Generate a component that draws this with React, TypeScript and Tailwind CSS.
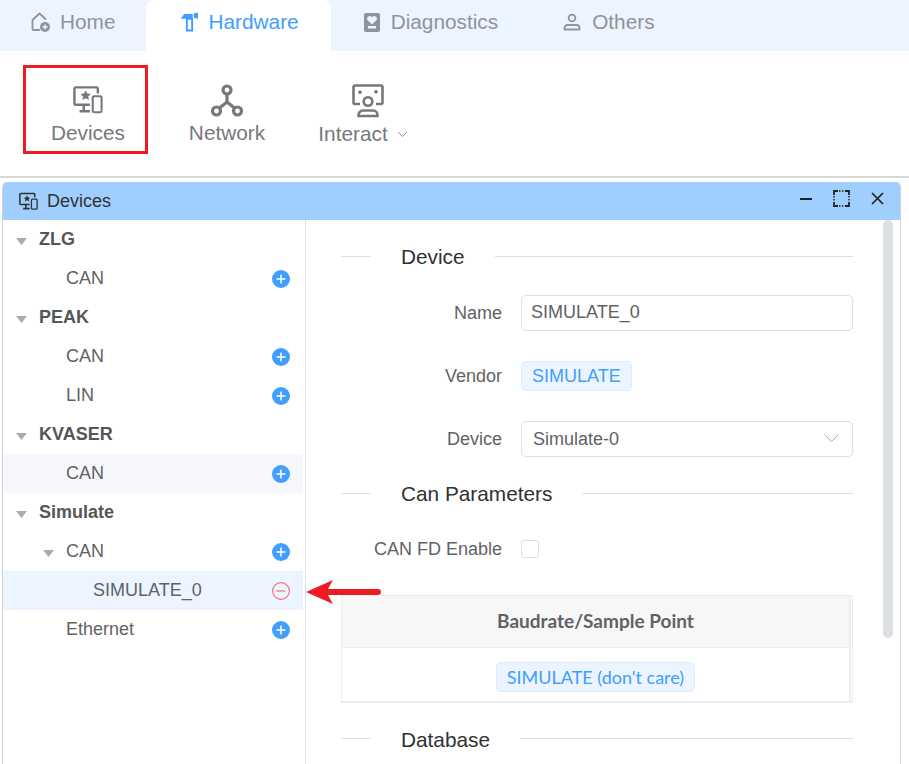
import React from 'react';

const SANS = "font-['Liberation_Sans',Arial,sans-serif]";

const HomeIcon = () => (
  <svg width="22" height="22" viewBox="0 0 22 22" fill="none">
    <path d="M9.500 19H3.500a1 1 0 0 1-1-1V9L9.500 2.500 15.500 8" stroke="#909399" strokeWidth="1.800" strokeLinejoin="round" strokeLinecap="round" />
    <circle cx="15" cy="16" r="5" fill="#909399" />
    <path d="M12.500 16h5M15 13.500v5" stroke="#ecf5ff" strokeWidth="1.400" />
  </svg>
);

const HammerIcon = () => (
  <svg width="17" height="20" viewBox="0 0 16 18" fill="none">
    <path d="M0 5.500L3 1.500h8V6H0z" fill="#409eff" />
    <path d="M5.500 6h5v11h-5z" stroke="#409eff" strokeWidth="1.800" />
    <path d="M12 1l4-1v6l-4-1z" fill="#409eff" />
  </svg>
);

const BookIcon = () => (
  <svg width="16" height="19" viewBox="0 0 16 19">
    <path fillRule="evenodd" d="M2 0h12a2 2 0 0 1 2 2v15a2 2 0 0 1-2 2H2a2 2 0 0 1-2-2V2a2 2 0 0 1 2-2zM4 13v2.500h8V13zM8 11.500l4.400-4.300a2.600 2.600 0 0 0-4.400-3 2.600 2.600 0 0 0-4.400 3z" fill="#909399" />
  </svg>
);

const PersonIcon = () => (
  <svg width="18" height="18" viewBox="0 0 18 18" fill="none" stroke="#909399" strokeWidth="1.800">
    <circle cx="9" cy="5" r="3.400" />
    <path d="M1.500 16.500v-1.500a3 3 0 0 1 3-3h9a3 3 0 0 1 3 3v1.500z" strokeLinejoin="round" />
  </svg>
);

const DevicesIcon = ({ size, color }: { size: number; color: string }) => (
  <svg width={size} height={size} viewBox="0 0 32 30" fill="none">
    <path d="M18 20H3a1.500 1.500 0 0 1-1.500-1.500V3A1.500 1.500 0 0 1 3 1.500h22A1.500 1.500 0 0 1 26.500 3v5" stroke={color} strokeWidth="2.600" strokeLinejoin="round" />
    <path d="M13.500 4.500l1.700 3.600 3.900.4-2.900 2.700.8 3.800-3.500-2-3.500 2 .8-3.800-2.900-2.700 3.900-.4z" fill={color} />
    <path d="M11.500 20v6M7 27h11" stroke={color} strokeWidth="2.600" />
    <rect x="21" y="11" width="9.500" height="17" rx="1.500" stroke={color} strokeWidth="2.200" />
  </svg>
);

const NetworkIcon = () => (
  <svg width="32" height="34" viewBox="0 0 32 34" fill="none" stroke="#76787d" strokeWidth="3.200">
    <circle cx="16" cy="6" r="4" />
    <circle cx="5.500" cy="27" r="4" />
    <circle cx="26.500" cy="27" r="4" />
    <path d="M16 10v8L8.500 24M16 18l7.500 6" />
  </svg>
);

const InteractIcon = () => (
  <svg width="32" height="34" viewBox="0 0 32 34" fill="none" stroke="#76787d" strokeWidth="2.600">
    <path d="M8 20H3a1.500 1.500 0 0 1-1.500-1.500V3A1.500 1.500 0 0 1 3 1.500h26A1.500 1.500 0 0 1 30.500 3v15.500A1.500 1.500 0 0 1 29 20h-5" strokeLinejoin="round" />
    <circle cx="16" cy="17.500" r="4.300" />
    <path d="M6.500 32v-1a4.500 4.500 0 0 1 4.500-4.500h10a4.500 4.500 0 0 1 4.500 4.500v1z" strokeLinejoin="round" />
    <path d="M8 6l2.200 2.200L8 10.400 5.800 8.200zM24 5.500l2.200 2.200L24 9.900l-2.200-2.200z" fill="#76787d" stroke="none" />
  </svg>
);

const Caret = () => (
  <svg width="11" height="7" viewBox="0 0 11 7" className="shrink-0">
    <path d="M0 0h11L5.500 7z" fill="#a8abb2" />
  </svg>
);

const Plus = () => (
  <svg width="18" height="18" viewBox="0 0 18 18" className="shrink-0">
    <circle cx="9" cy="9" r="9" fill="#409eff" />
    <path d="M4.500 9h9M9 4.500v9" stroke="#fff" strokeWidth="1.500" />
  </svg>
);

const Minus = () => (
  <svg width="18" height="18" viewBox="0 0 18 18" fill="none" className="shrink-0">
    <circle cx="9" cy="9" r="8.400" stroke="#f56c6c" strokeWidth="1.100" />
    <path d="M4.500 9h9" stroke="#f56c6c" strokeWidth="1.200" />
  </svg>
);

const TABS = [
  { label: 'Home', icon: <HomeIcon />, cls: 'pl-[29px] pr-[31px] gap-[8px]' },
  { label: 'Hardware', icon: <HammerIcon />, cls: 'pl-[35px] pr-[32px] gap-[10px] bg-white rounded-t-lg text-[#409eff]' },
  { label: 'Diagnostics', icon: <BookIcon />, cls: 'pl-[33px] pr-[31px] gap-[11px]' },
  { label: 'Others', icon: <PersonIcon />, cls: 'pl-[34px] pr-[31px] gap-[11px]' },
];

type Row = { label: string; indent: number; bold?: boolean; caret?: boolean; action?: 'plus' | 'minus'; bg?: string };

const TREE: Row[] = [
  { label: 'ZLG', indent: 36, bold: true, caret: true },
  { label: 'CAN', indent: 63, action: 'plus' },
  { label: 'PEAK', indent: 36, bold: true, caret: true },
  { label: 'CAN', indent: 63, action: 'plus' },
  { label: 'LIN', indent: 63, action: 'plus' },
  { label: 'KVASER', indent: 36, bold: true, caret: true },
  { label: 'CAN', indent: 63, action: 'plus', bg: 'bg-[#f5f7fa]' },
  { label: 'Simulate', indent: 36, bold: true, caret: true },
  { label: 'CAN', indent: 63, caret: true, action: 'plus' },
  { label: 'SIMULATE_0', indent: 90, action: 'minus', bg: 'bg-[#ecf5ff]' },
  { label: 'Ethernet', indent: 63, action: 'plus' },
];

const TreeRow = ({ row }: { row: Row }) => (
  <div className={`relative flex items-center h-[39px] pr-[13px] ${row.bg || ''}`} style={{ paddingLeft: row.indent }}>
    {row.caret && (
      <span className="absolute top-[18px] flex" style={{ left: row.indent - 23 }}>
        <Caret />
      </span>
    )}
    <span className={`flex-1 pb-[2px] text-[18px] leading-none ${row.bold ? 'font-bold text-[#555659]' : 'text-[#606266]'}`}>{row.label}</span>
    {row.action === 'plus' && <Plus />}
    {row.action === 'minus' && <Minus />}
  </div>
);

const SectionTitle = ({ title, className }: { title: string; className?: string }) => (
  <div className={`flex items-center ${className || ''}`}>
    <div className="w-[30px] h-px bg-[#dcdfe6]" />
    <span className="px-[30px] pt-[2px] text-[20.8px] leading-none text-[#303133]">{title}</span>
    <div className="flex-1 h-px bg-[#dcdfe6]" />
  </div>
);

const FieldLabel = ({ children }: { children: React.ReactNode }) => (
  <span className="w-[181px] pr-[19px] text-right text-[18px] leading-none text-[#606266] shrink-0">{children}</span>
);

const Tag = ({ children, className }: { children: React.ReactNode; className?: string }) => (
  <span className={`inline-flex items-center h-[30px] pl-[10px] pr-[10px] rounded-[5px] border border-[#d9ecff] bg-[#ecf5ff] text-[#409eff] ${className || ''}`}>{children}</span>
);

export default function App() {
  return (
    <div className={`relative w-[909px] h-[764px] overflow-hidden bg-white ${SANS}`}>
      {/* tabs */}
      <div className="flex h-[51px] bg-[#ecf5ff] pl-[1px] text-[20.8px] text-[#909399]">
        {TABS.map(t => (
          <div key={t.label} className={`flex items-center pb-[7px] ${t.cls}`}>
            {t.icon}
            <span>{t.label}</span>
          </div>
        ))}
      </div>

      {/* toolbar */}
      <div className="flex items-start h-[127px] pl-[23px] pt-[14px] border-b-2 border-[#d8d9dc] text-[20.8px] text-[#76787d]">
        <div className="flex flex-col items-center w-[125px] h-[89px] border-[3px] border-[#ed1c24] pt-[17px] pl-[5px]">
          <DevicesIcon size={30} color="#76787d" />
          <span className="leading-none mt-[8px]">Devices</span>
        </div>
        <div className="flex flex-col items-center w-[76px] ml-[41px] pt-[19px]">
          <NetworkIcon />
          <span className="leading-none mt-[5px]">Network</span>
        </div>
        <div className="flex flex-col items-center w-[92px] ml-[52px] pt-[19px]">
          <span className="flex ml-[10px]">
            <InteractIcon />
          </span>
          <div className="flex items-center mt-[6px] leading-none">
            <span>Interact</span>
            <svg width="11" height="7" viewBox="0 0 11 7" fill="none" className="ml-[9px]">
              <path d="M1 1l4.500 4.500L10 1" stroke="#909399" strokeWidth="1" />
            </svg>
          </div>
        </div>
      </div>

      {/* window */}
      <div className="ml-[2px] mt-[4px] w-[899px] h-[600px] flex flex-col rounded-t-[5px] border-x border-[#d0d2d6] overflow-hidden">
        <div className="flex items-center h-[38px] bg-[#a0cfff] shrink-0 pl-[16px] text-[#303133]">
          <DevicesIcon size={19} color="#303133" />
          <span className="ml-[9px] text-[18px] flex-1">Devices</span>
          <div className="flex items-center mb-[5px]">
            <svg width="12" height="2" viewBox="0 0 12 2" className="mr-[21px]"><path d="M0 1h12" stroke="#222" strokeWidth="2" /></svg>
            <svg width="17" height="17" viewBox="0 0 17 17" fill="none" className="mr-[21px]">
              <path d="M1 5V1h4M12 1h4v4M16 12v4h-4M5 16H1v-4" stroke="#222" strokeWidth="1.800" />
              <path d="M6 1h5M1 6v5M16 6v5M6 16h5" stroke="#222" strokeWidth="1.500" strokeDasharray="1.500 1.500" />
            </svg>
            <svg width="13" height="13" viewBox="0 0 13 13" className="mr-[16px]"><path d="M1 1l11 11M12 1L1 12" stroke="#222" strokeWidth="1.700" /></svg>
          </div>
        </div>

        <div className="flex flex-1 min-h-0">
          <div className="w-[300px] shrink-0">
            {TREE.map((r, i) => <TreeRow key={i} row={r} />)}
          </div>
          <div className="w-px bg-[#dcdfe6] shrink-0 ml-[2px] mr-[35px]" />

          <div className="w-[512px] shrink-0 pt-[25px]">
            <SectionTitle title="Device" />
            <div className="flex items-center mt-[27px] h-[36px] ml-[-1px]">
              <FieldLabel>Name</FieldLabel>
              <div className="flex-1 h-[36px] flex items-center rounded-[5px] border-[1.500px] border-[#dcdfe6] px-[9px] text-[18px] text-[#606266]">SIMULATE_0</div>
            </div>
            <div className="flex items-center mt-[27px] h-[36px] ml-[-1px]">
              <FieldLabel>Vendor</FieldLabel>
              <Tag className="text-[18px] pt-[2px]">SIMULATE</Tag>
            </div>
            <div className="flex items-center mt-[27px] h-[36px] ml-[-1px]">
              <FieldLabel>Device</FieldLabel>
              <div className="flex-1 h-[36px] flex items-center rounded-[5px] border-[1.500px] border-[#dcdfe6] pl-[11px] pr-[10px] text-[18px] text-[#606266]">
                <span className="flex-1 pt-[1px]">Simulate-0</span>
                <svg width="15" height="9" viewBox="0 0 15 9" fill="none" className="mr-[3px]"><path d="M.5.5l7 7 7-7" stroke="#a8abb2" strokeWidth="1" /></svg>
              </div>
            </div>
            <SectionTitle title="Can Parameters" className="mt-[25px]" />
            <div className="flex items-center mt-[34px] h-[20px] ml-[-1px]">
              <FieldLabel>CAN FD Enable</FieldLabel>
              <span className="w-[18px] h-[18px] rounded-[3px] border border-[#dcdfe6]" />
            </div>
            <div className="mt-[36px] border border-[#ebeef5] border-b-[2px] font-['Lato',sans-serif]">
              <div className="flex items-center justify-center h-[52px] bg-[#f7f7f7] border-b border-[#ebeef5] border-r-[2px] mr-[1px]">
                <span className="text-[19px] font-bold text-[#606266]">Baudrate/Sample Point</span>
              </div>
              <div className="flex items-center justify-center h-[53px] pt-[6px] border-r-[2px] border-[#ebeef5] mr-[1px]">
                <Tag className="text-[18px]">SIMULATE (don't care)</Tag>
              </div>
            </div>
            <SectionTitle title="Database" className="mt-[25px]" />
          </div>

          {/* scrollbar */}
          <div className="ml-[30px] w-[10px] h-[418px] rounded-[5px] bg-[#dcdfe3]" />
        </div>
      </div>

      {/* annotation arrow */}
      <svg width="75" height="24" viewBox="0 0 75 24" className="absolute left-[306px] top-[580px]">
        <path d="M0 12L27 0l-5 9h50a3 3 0 0 1 0 6H22l5 9z" fill="#ed1c24" />
      </svg>
    </div>
  );
}
